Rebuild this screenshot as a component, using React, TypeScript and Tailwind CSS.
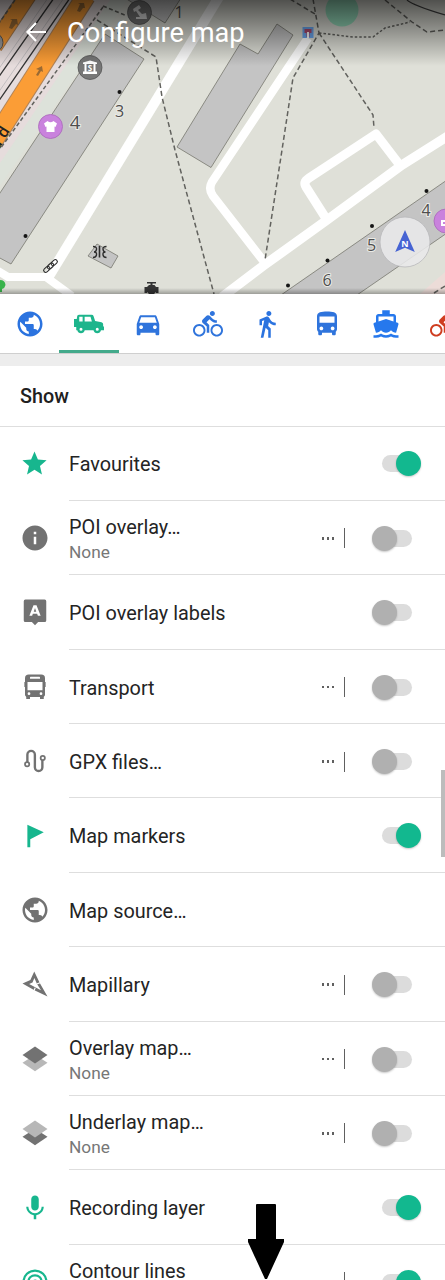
import React from "react";
import {
  MdDirectionsBike,
  MdDirectionsBoat,
  MdDirectionsBus,
  MdDirectionsCar,
  MdDirectionsWalk,
  MdInfo,
  MdMic,
  MdPublic,
  MdStar,
} from "react-icons/md";

function MapView() {
  return (
    <svg width="445" height="294" viewBox="0 0 445 294" className="block" fontFamily="'Open Sans', 'Noto Sans', sans-serif">
      <defs>
        <linearGradient id="shade" x1="0" y1="0" x2="0" y2="1">
          <stop offset="0" stopColor="#000" stopOpacity="0.64" />
          <stop offset="0.5" stopColor="#000" stopOpacity="0.33" />
          <stop offset="1" stopColor="#000" stopOpacity="0" />
        </linearGradient>
        <linearGradient id="edge" x1="0" y1="0" x2="0" y2="1">
          <stop offset="0" stopColor="#000" stopOpacity="0" />
          <stop offset="1" stopColor="#000" stopOpacity="0.3" />
        </linearGradient>
      </defs>
      <rect width="445" height="294" fill="#dfe0d8" />
      <path d="M0 0H127L0 186Z" fill="#dde2da" />
      <path d="M0 0H110L0 163Z" fill="#e6dcdc" />
      <path d="M420 294L445 272V294Z" fill="#ecdcd8" />

      <g fill="none">
        <path d="M28 -5L-6 46" stroke="#a87a4c" strokeWidth="18" />
        <path d="M28 -5L-6 46" stroke="#f79a35" strokeWidth="16" />
        <path d="M86 -4L-8 143" stroke="#b08358" strokeWidth="20" />
        <path d="M86 -4L-8 143" stroke="#fb9d36" strokeWidth="18" />
        <path d="M54 -2L-2 78M70 -2L-2 102" stroke="#353535" strokeWidth="1.4" />
        <path d="M48 -2L-2 70M64 -2L-2 93" stroke="#c2bec0" strokeWidth="1" />
      </g>
      <g fill="#9a6a34">
        <path d="M9 28L12 20L10 19L17 19L18 25L16 24L12 29Z" />
        <path d="M77 11L80 4L78 3L84 3L85 8L83 8L80 12Z" />
        <path d="M36 75L39 70L36 69L42 66L43 72L41 71L38 76Z" />
      </g>
      <text transform="translate(5 139) rotate(-58)" fontSize="16" fontWeight="600" fill="#222">d</text>
      <text transform="translate(-2 151) rotate(-58)" fontSize="16" fontWeight="600" fill="#222">a</text>

      <g fill="#c4c4c4" stroke="#77776f" strokeWidth="0.8">
        <path d="M105 34L144 59L11 264L-2 257V196Z" />
        <path d="M125 -2L165 23L181 -2Z" />
        <path d="M277 24L293 35L211 167.500L177 147L240 44L258 54Z" />
        <path d="M97 244L118 256L111 268L88 256Z" />
        <path d="M281 295L447 180V233L357 295Z" />
      </g>

      <g fill="none" stroke="#fff" strokeLinejoin="round">
        <path d="M222 -8L48 278" strokeWidth="10" />
        <path d="M-2 271L8 277H46L72 296" strokeWidth="8" />
        <path d="M308 38L212 182Q208 189 213 196L265 263" strokeWidth="8.500" />
        <path d="M222 297L263 266L327 220L402 165L448 136" strokeWidth="9.500" />
        <path d="M327 220L306 187Q303 182 309 178L376 134L402 168" strokeWidth="9" />
      </g>

      <g fill="none" stroke="#62625e" strokeWidth="1.5" strokeDasharray="5 3">
        <path d="M103 7L0 149M15 0L0 22M103 6L127 16" strokeDasharray="4 2.500" />
        <path d="M97 20L156 57L162 97L175 150L214 294" />
        <path d="M290 -1L315 14M313 -1L319 33L293 78L282 150L265 260M319 33L373 115L374 128" />
        <path d="M385 0L412 22L427 32L445 30" />
        <path d="M319 33L353 37H373L385 28L410 22" strokeDasharray="2.500 2" />
        <path d="M434 293L445 286" />
      </g>
      <path d="M407 0Q412 5 445 15" fill="none" stroke="#444" strokeWidth="1.2" />

      <g fill="#151515">
        <circle cx="119.500" cy="92" r="2" />
        <circle cx="25.500" cy="236" r="2" />
        <circle cx="426.500" cy="191" r="2" />
        <circle cx="372" cy="226" r="2" />
        <circle cx="327.500" cy="260.500" r="2" />
        <circle cx="288" cy="285.500" r="2" />
      </g>

      <g fill="#4e4e4e" stroke="#ebebe6" strokeWidth="2" paintOrder="stroke" textAnchor="middle" fontSize="16">
        <text x="119.500" y="117">3</text>
        <text x="75" y="129" fontSize="18.500">4</text>
        <text x="179" y="18" stroke="none">1</text>
        <text x="426" y="216">4</text>
        <text x="371.500" y="251">5</text>
        <text x="327" y="286">6</text>
      </g>

      <circle cx="342" cy="10" r="16.500" fill="#96dcbc" />
      <rect x="302.500" y="27" width="11" height="11" fill="#6ba6ef" />
      <path d="M304.500 29H311.500V33H309.500V37H306.500V33H304.500Z" fill="#b04b6e" />
      <path d="M307 32H309V38H307Z" fill="#fff" />

      <circle cx="90" cy="67.500" r="12" fill="#777" stroke="#555" strokeWidth="0.8" />
      <path d="M83 64V62.500L90 60.500L97 62.500V64H95.500V71.500H97V74H83V71.500H84.500V64ZM86.500 64V71.500H93.500V64Z" fill="#fff" fillRule="evenodd" />
      <text x="90" y="71" textAnchor="middle" fontSize="8" fontWeight="700" fill="#fff">S</text>
      <circle cx="139.500" cy="12.500" r="12" fill="#777" stroke="#555" strokeWidth="0.8" />
      <path d="M133 9L139 5L141 8L138 10L142 14L146 13L147 19H136V17H140L136 11L134 12Z" fill="#ddd" />
      <circle cx="-7" cy="42.500" r="10" fill="#999" stroke="#555" />

      <circle cx="50.500" cy="126.500" r="12" fill="#c982dd" stroke="#a868b9" strokeWidth="0.8" />
      <path d="M47.500 121Q50.500 123.500 53.500 121L57 123.500L55.500 127L54.500 126.500V132H46.500V126.500L45.500 127L44 123.500Z" fill="#fff" />
      <circle cx="446" cy="221" r="12" fill="#c982dd" stroke="#a868b9" strokeWidth="0.8" />
      <path d="M441 220H450V226H441ZM443 222V224H445V222Z" fill="#fff" fillRule="evenodd" />

      <g fill="none" stroke="#2c2c2c" strokeWidth="1.300">
        <path d="M99.500 246V257.500" strokeWidth="1.600" />
        <path d="M93 246.500Q97 246.500 96.500 249.500Q96 252 94 252Q97 252 96.500 255Q96 257.500 93 257.500" />
        <path d="M106.500 246.500Q102.500 246.500 103 249.500Q103.500 252 105.500 252Q102.500 252 103 255Q103.500 257.500 106.500 257.500" />
        <g transform="rotate(-42 50.500 266)" strokeWidth="1.1">
          <rect x="42" y="264" width="7" height="4" rx="2" />
          <rect x="47" y="264" width="7" height="4" rx="2" />
          <rect x="52" y="264" width="7" height="4" rx="2" />
        </g>
      </g>
      <path d="M147 282H156V283.500H152.500V285H154.500L156 287H158.500V293H156V292L154 294H149L147 292V293H144.500V287H147L149 285H150.500V283.500H147Z" fill="#333" />
      <path d="M0 280Q5 280 5.500 285Q5 288 2 289V292H0Z" fill="#39b34b" />

      <rect width="445" height="66" fill="url(#shade)" />
      <rect y="288" width="445" height="6" fill="url(#edge)" />

      <circle cx="405" cy="242" r="25" fill="#e9e9ea" fillOpacity="0.87" stroke="#b9b9bb" strokeWidth="0.800" />
      <path d="M405 230L414.800 252L405 247.800L395.200 252Z" fill="#4663d3" />
      <text x="405" y="247" textAnchor="middle" fontSize="9" fontWeight="700" fill="#fff">N</text>
    </svg>
  );
}

function Drawing({ children, className = "" }: { children: React.ReactNode; className?: string }) {
  return (
    <svg viewBox="0 0 24 24" fill="currentColor" className={`size-[30px] ${className}`}>
      {children}
    </svg>
  );
}

const OffroadIcon = () => (
  <Drawing>
    <path
      fillRule="evenodd"
      d="M2.500 6Q2.500 4.500 4 4.500H14Q15.300 4.500 15.600 5.600L16.900 9.600L22 10.500Q23.300 10.800 23.300 12V14H24V17H21.600A3.100 3.100 0 0 1 15.600 17H8.600A3.100 3.100 0 0 1 2.600 17H1.800V14.300H0V8H2.200ZM4.200 6.200V10H6.900V6.200ZM8.500 6.200V10H14.300L13.200 6.200ZM5.600 15A1.200 1.200 0 1 0 5.600 17.400A1.200 1.200 0 1 0 5.600 15ZM18.600 15A1.200 1.200 0 1 0 18.600 17.400A1.200 1.200 0 1 0 18.600 15Z"
    />
  </Drawing>
);

const LabelIcon = () => (
  <Drawing>
    <path fillRule="evenodd" d="M4.300 2H19.700Q21 2 21 3.300V18.700Q21 20 19.700 20H14.500L12 22.500L9.500 20H4.300Q3 20 3 18.700V3.300Q3 2 4.300 2ZM10.800 6.500L7.500 15H9.700L10.300 13.300H13.700L14.300 15H16.500L13.200 6.500ZM12 8.800L13 11.700H11Z" />
  </Drawing>
);

const TransportIcon = () => (
  <Drawing>
    <path
      fillRule="evenodd"
      d="M7 2H17Q20 2 20 5V8H20.500V12H20V18.500L19 20V21.500H16V20H8V21.500H5V20L4 18.500V12H3.500V8H4V5Q4 2 7 2ZM8.500 3.800Q8 3.800 8 4.300V5.300H16V4.300Q16 3.800 15.500 3.800ZM6 8V14.500H18V8ZM7.200 16.200A1.100 1.100 0 1 0 7.200 18.400A1.100 1.100 0 1 0 7.200 16.200ZM16.800 16.200A1.100 1.100 0 1 0 16.800 18.400A1.100 1.100 0 1 0 16.800 16.200Z"
    />
  </Drawing>
);

const GpxIcon = () => (
  <Drawing>
    <g fill="none" stroke="currentColor" strokeWidth="1.900">
      <path d="M5.900 13V6.900A2.900 2.900 0 0 1 11.900 6.900V17A2.900 2.900 0 0 0 17.900 17V10.500" />
      <circle cx="5.700" cy="14.500" r="1.700" fill="#fff" strokeWidth="1.400" />
      <circle cx="18.200" cy="9.500" r="1.700" fill="#fff" strokeWidth="1.400" />
    </g>
  </Drawing>
);

const FlagIcon = () => (
  <Drawing>
    <path d="M5.900 3L19 9L8.200 14.500V21H5.900Z" />
  </Drawing>
);

const MapillaryIcon = () => (
  <Drawing>
    <path fillRule="evenodd" d="M11.400 2L15.700 11L22 22L11.500 17L2 11.500L8.300 8.800ZM11.500 7.200L10 10.700L7.300 11.900L12.200 14.600L16.800 17L13.600 12Z" />
    <path d="M13.400 12L16.500 10.800M10.900 17.800L12.200 15" stroke="#fff" strokeWidth="0.9" />
  </Drawing>
);

const OverlayIcon = () => (
  <Drawing>
    <path d="M12 8.500L22 15L12 21.800L2 15Z" opacity="0.5" />
    <path d="M12 2L22 8.800L12 15.500L2 8.800Z" />
  </Drawing>
);

const UnderlayIcon = () => (
  <Drawing>
    <path d="M12 8.500L22 15L12 21.800L2 15Z" />
    <path d="M12 2L22 8.800L12 15.500L2 8.800Z" fill="#b7b7b7" />
  </Drawing>
);

const ContourIcon = () => (
  <Drawing>
    <g fill="none" stroke="currentColor" strokeWidth="1.800">
      <path d="M2.900 15V11.500A9.100 8.600 0 0 1 21.100 11.500V15" />
      <path d="M6.800 15V11.500A5.200 4.900 0 0 1 17.200 11.500V15" />
      <path d="M10.500 15V12A1.700 1.700 0 0 1 13.700 12V15" />
    </g>
  </Drawing>
);

const material = "size-[30px]";

const tabs: { key: string; icon: React.ReactNode; color: string; active?: boolean }[] = [
  { key: "browse", icon: <MdPublic className={material} />, color: "text-[#2b73df]" },
  { key: "offroad", icon: <OffroadIcon />, color: "text-[#1db58c]", active: true },
  { key: "car", icon: <MdDirectionsCar className={material} />, color: "text-[#2f74dc]" },
  { key: "bike", icon: <MdDirectionsBike className={material} />, color: "text-[#2f74dc]" },
  { key: "walk", icon: <MdDirectionsWalk className={material} />, color: "text-[#2b73df]" },
  { key: "bus", icon: <MdDirectionsBus className={material} />, color: "text-[#2f74dc]" },
  { key: "boat", icon: <MdDirectionsBoat className={material} />, color: "text-[#2678ed]" },
  { key: "cycle", icon: <MdDirectionsBike className={material} />, color: "text-[#cf3d20]" },
];

type Row = { icon: React.ReactNode; title: string; note?: string; more?: boolean; state?: "on" | "off"; green?: boolean };

const rows: Row[] = [
  { icon: <MdStar className="size-[29px]" />, title: "Favourites", state: "on", green: true },
  { icon: <MdInfo className={material} />, title: "POI overlay…", note: "None", more: true, state: "off" },
  { icon: <LabelIcon />, title: "POI overlay labels", state: "off" },
  { icon: <TransportIcon />, title: "Transport", more: true, state: "off" },
  { icon: <GpxIcon />, title: "GPX files…", more: true, state: "off" },
  { icon: <FlagIcon />, title: "Map markers", state: "on", green: true },
  { icon: <MdPublic className={material} />, title: "Map source…" },
  { icon: <MapillaryIcon />, title: "Mapillary", more: true, state: "off" },
  { icon: <OverlayIcon />, title: "Overlay map…", note: "None", more: true, state: "off" },
  { icon: <UnderlayIcon />, title: "Underlay map…", note: "None", more: true, state: "off" },
  { icon: <MdMic className={material} />, title: "Recording layer", state: "on", green: true },
  { icon: <ContourIcon />, title: "Contour lines", note: "None", more: true, state: "on", green: true },
];

function Toggle({ on }: { on: boolean }) {
  return (
    <span className={`flex h-[17px] w-[34px] items-center rounded-full bg-[#dcdcdc] ${on ? "mr-[29px] justify-end" : "mr-[33px] justify-start"}`}>
      <span
        className={`size-[25px] shrink-0 rounded-full shadow-[0_1px_2px_rgba(0,0,0,0.22)] ${on ? "-mr-[5px] bg-[#12b88f]" : "-ml-[6px] bg-[#b0b0b0]"}`}
      />
    </span>
  );
}

function SettingRow({ row }: { row: Row }) {
  return (
    <li className="flex h-[74.4px] shrink-0">
      <span className={`flex w-[69px] shrink-0 items-center justify-center ${row.green ? "text-[#17b68e]" : "text-[#727272]"}`}>
        {row.icon}
      </span>
      <div className="flex grow items-center border-b border-[#dedede] pt-[1.5px]">
        <div className={`flex grow flex-col ${row.note ? "pt-[2px]" : "pt-[3px]"}`}>
          <span className="text-[19.85px] leading-[26px] text-[#242424]">{row.title}</span>
          {row.note && <span className="-mt-px text-[17.3px] leading-[24px] text-[#777]">{row.note}</span>}
        </div>
        {row.more && (
          <span className="mr-[33px] flex items-center">
            <span className="flex gap-[2.500px]">
              <i className="size-[2.500px] bg-[#606060]" />
              <i className="size-[2.500px] bg-[#606060]" />
              <i className="size-[2.500px] bg-[#606060]" />
            </span>
            <i className={`ml-[10px] h-5 w-px bg-[#606060] ${row.state === "on" ? "mr-1" : ""}`} />
          </span>
        )}
        {row.state && <Toggle on={row.state === "on"} />}
      </div>
    </li>
  );
}

export default function App() {
  return (
    <div className="relative flex h-[1280px] w-[445px] flex-col overflow-hidden bg-white font-['Roboto',sans-serif]">
      <section className="relative h-[294px] shrink-0">
        <MapView />
        <header className="absolute inset-x-0 top-0 flex h-[64px] items-center pl-[25px] text-white">
          <svg width="23" height="22" viewBox="0 0 23 22" fill="none" stroke="currentColor" strokeWidth="2.200" className="shrink-0">
            <path d="M21 11H3M11 2L2.500 11L11 20" />
          </svg>
          <h1 className="ml-[19px] pt-[2px] text-[27.2px] leading-[36px] whitespace-nowrap">Configure map</h1>
        </header>
      </section>

      <nav className="h-[60px] shrink-0 overflow-hidden border-b border-[#cfcfcf] bg-white">
        <div className="flex h-full w-[476px]">
          {tabs.map((tab) => (
            <button
              key={tab.key}
              className={`flex w-[59.4px] shrink-0 items-center justify-center border-b-[3px] pt-[3px] ${tab.color} ${tab.active ? "border-[#43aa8b]" : "border-transparent"}`}
            >
              {tab.icon}
            </button>
          ))}
        </div>
      </nav>
      <div className="h-[12px] shrink-0 bg-[#ededed]" />

      <h2 className="flex h-[60.5px] shrink-0 items-center border-b border-[#dedede] pt-[2px] pl-5 text-[19.8px] font-medium text-[#202020]">Show</h2>
      <ul className="flex flex-col">
        {rows.map((row) => (
          <SettingRow key={row.title} row={row} />
        ))}
      </ul>

      <span className="absolute top-[770px] right-0 h-[87px] w-[4px] bg-[#bcbcbc]" />
      <svg width="36" height="76" viewBox="0 0 36 76" className="absolute top-[1204px] left-[248px]">
        <path d="M9 0H27Q28 0 28 1V35H36V38L19 75H17L0 38V35H8V1Q8 0 9 0Z" fill="#000" />
      </svg>
    </div>
  );
}
